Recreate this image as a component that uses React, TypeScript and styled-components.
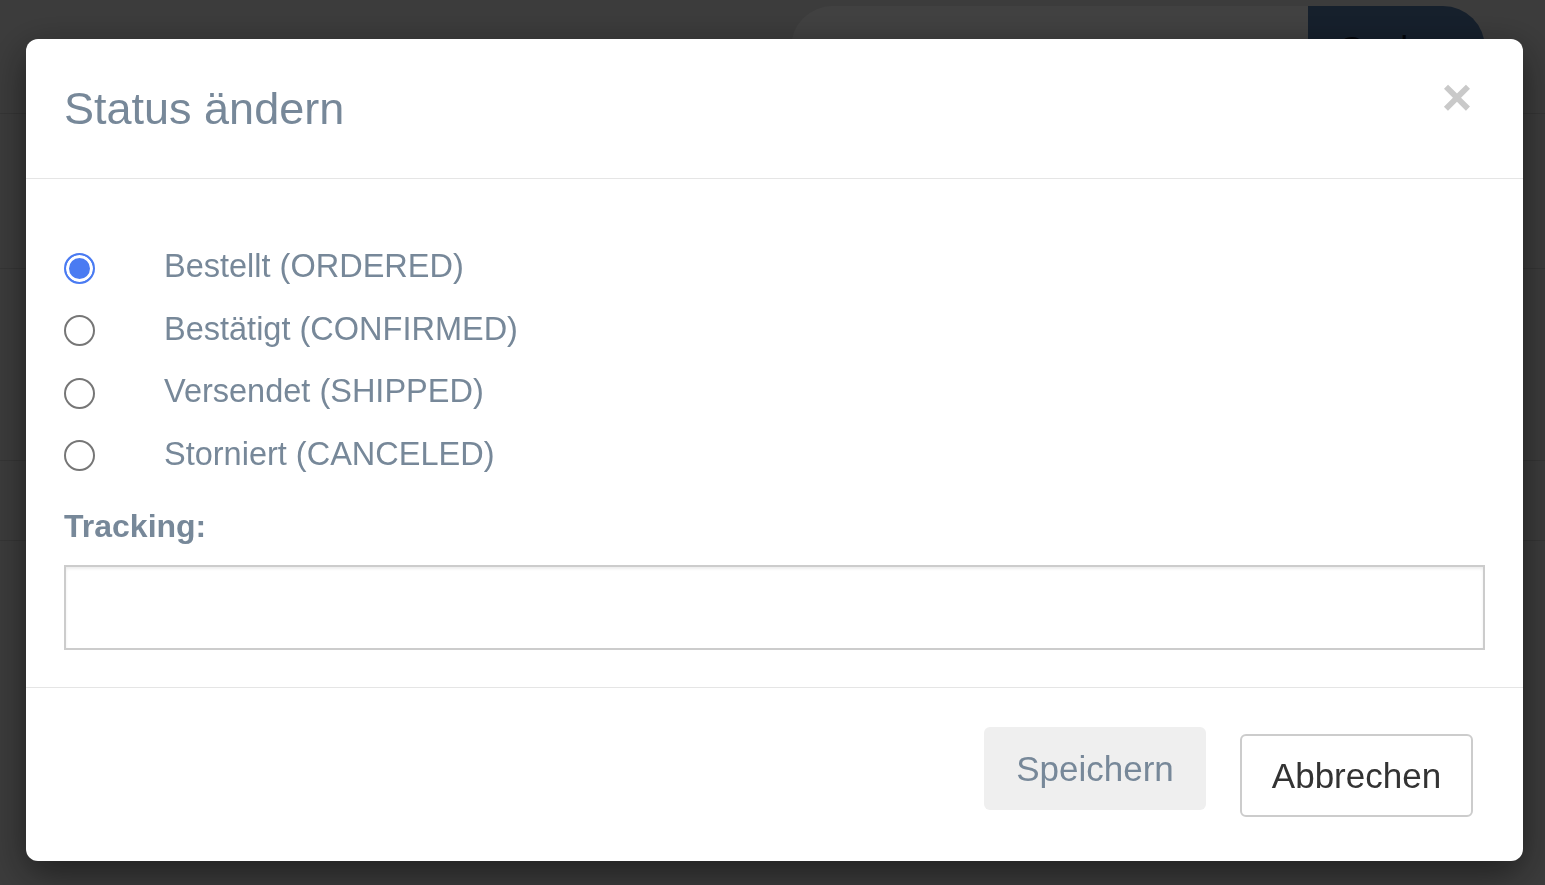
import styled, { createGlobalStyle } from "styled-components";

const GlobalStyle = createGlobalStyle`
	html, body {
		margin: 0;
		padding: 0;
		overflow: hidden;
	}
	body {
		font-family: "Liberation Sans", Arial, Helvetica, sans-serif;
		background: #ebebeb;
	}
	* {
		box-sizing: border-box;
	}
`;

const Page = styled.div`
	min-height: 100vh;
	background: #ebebeb;
`;

const NavBar = styled.div`
	height: 114px;
	display: flex;
	justify-content: flex-end;
	align-items: flex-start;
	padding: 6px 60px 0 0;
	border-bottom: 1px solid #d2d2d2;
`;

const SearchInput = styled.div`
	width: 517px;
	height: 85px;
	background: #ffffff;
	border-radius: 42px 0 0 42px;
`;

const SearchButton = styled.div`
	width: 177px;
	height: 85px;
	background: #567dac;
	border-radius: 0 42px 42px 0;
	color: #0d1a2b;
	font-size: 35px;
	display: flex;
	align-items: center;
	padding-left: 32px;
`;

const Row = styled.div<{ $h: number }>`
	height: ${(p) => p.$h}px;
	border-bottom: 1px solid #d2d2d2;
`;

const Backdrop = styled.div`
	position: fixed;
	inset: 0;
	background: rgba(0, 0, 0, 0.745);
	padding: 39px 0 0 26px;
`;

const Modal = styled.div`
	width: 1497px;
	background: #ffffff;
	border-radius: 12px;
	box-shadow: 0 12px 38px rgba(0, 0, 0, 0.5);
	overflow: hidden;
`;

const Header = styled.div`
	position: relative;
	padding: 37.5px 38px;
	border-bottom: 1px solid #e5e5e5;
`;

const Title = styled.h4`
	margin: 0;
	font-size: 45px;
	line-height: 64px;
	font-weight: 400;
	color: #778899;
`;

const Close = styled.button`
	position: absolute;
	top: 32px;
	right: 51px;
	padding: 0;
	border: none;
	background: transparent;
	font-family: "Liberation Sans", Arial, sans-serif;
	font-size: 52px;
	font-weight: 700;
	line-height: 52px;
	color: #c9c9c9;
	cursor: pointer;
`;

const Body = styled.div`
	padding: 37.5px 38px;
`;

const RadioList = styled.div`
	display: flex;
	flex-direction: column;
	gap: 12.5px;
	margin: 25px 0 22px;
`;

const RadioRow = styled.label`
	height: 50px;
	display: flex;
	align-items: center;
	gap: 69px;
	font-size: 32.5px;
	color: #778899;
	cursor: pointer;
`;

const RadioMark = styled.span<{ $checked?: boolean }>`
	width: 31px;
	height: 31px;
	flex: none;
	border-radius: 50%;
	margin-top: 3px;
	border: 2px solid ${(p) => (p.$checked ? "#4a7bf2" : "#767676")};
	background: ${(p) => (p.$checked ? "#4a7bf2" : "#ffffff")};
	box-shadow: ${(p) => (p.$checked ? "inset 0 0 0 3px #ffffff" : "none")};
`;

const FieldLabel = styled.div`
	font-size: 32px;
	line-height: 50px;
	font-weight: 700;
	color: #778899;
	margin-bottom: 13.5px;
`;

const TextInput = styled.input`
	display: block;
	width: 100%;
	height: 85px;
	border: 2px solid #cccccc;
	box-shadow: inset 0 2px 3px rgba(0, 0, 0, 0.075);
	font-size: 35px;
	padding: 0 30px;
	outline: none;
`;

const Footer = styled.div`
	border-top: 1px solid #e5e5e5;
	display: flex;
	justify-content: flex-end;
	align-items: flex-start;
	gap: 34px;
	padding: 39px 50px 44px;
`;

const Button = styled.button<{ $primary?: boolean }>`
	font-family: "Liberation Sans", Arial, sans-serif;
	font-size: 35px;
	border-radius: 6px;
	cursor: pointer;
	height: 83px;
	width: ${(p) => (p.$primary ? 222 : 233)}px;
	margin-top: ${(p) => (p.$primary ? 0 : 7)}px;
	background: ${(p) => (p.$primary ? "#efefef" : "#ffffff")};
	color: ${(p) => (p.$primary ? "#778899" : "#333333")};
	border: ${(p) => (p.$primary ? "none" : "2px solid #cccccc")};
`;

const statuses = [
	{ key: "ORDERED", label: "Bestellt (ORDERED)" },
	{ key: "CONFIRMED", label: "Bestätigt (CONFIRMED)" },
	{ key: "SHIPPED", label: "Versendet (SHIPPED)" },
	{ key: "CANCELED", label: "Storniert (CANCELED)" },
];

export default function App() {
	const current = "ORDERED";
	return (
		<>
			<GlobalStyle />
			<Page>
				<NavBar>
					<SearchInput />
					<SearchButton>Suchen</SearchButton>
				</NavBar>
				<Row $h={155} />
				<Row $h={192} />
				<Row $h={80} />
			</Page>
			<Backdrop>
				<Modal>
					<Header>
						<Title>Status ändern</Title>
						<Close aria-label="Schließen">×</Close>
					</Header>
					<Body>
						<RadioList>
							{statuses.map((s) => (
								<RadioRow key={s.key}>
									<RadioMark $checked={s.key === current} />
									{s.label}
								</RadioRow>
							))}
						</RadioList>
						<FieldLabel>Tracking:</FieldLabel>
						<TextInput type="text" />
					</Body>
					<Footer>
						<Button $primary>Speichern</Button>
						<Button>Abbrechen</Button>
					</Footer>
				</Modal>
			</Backdrop>
		</>
	);
}
